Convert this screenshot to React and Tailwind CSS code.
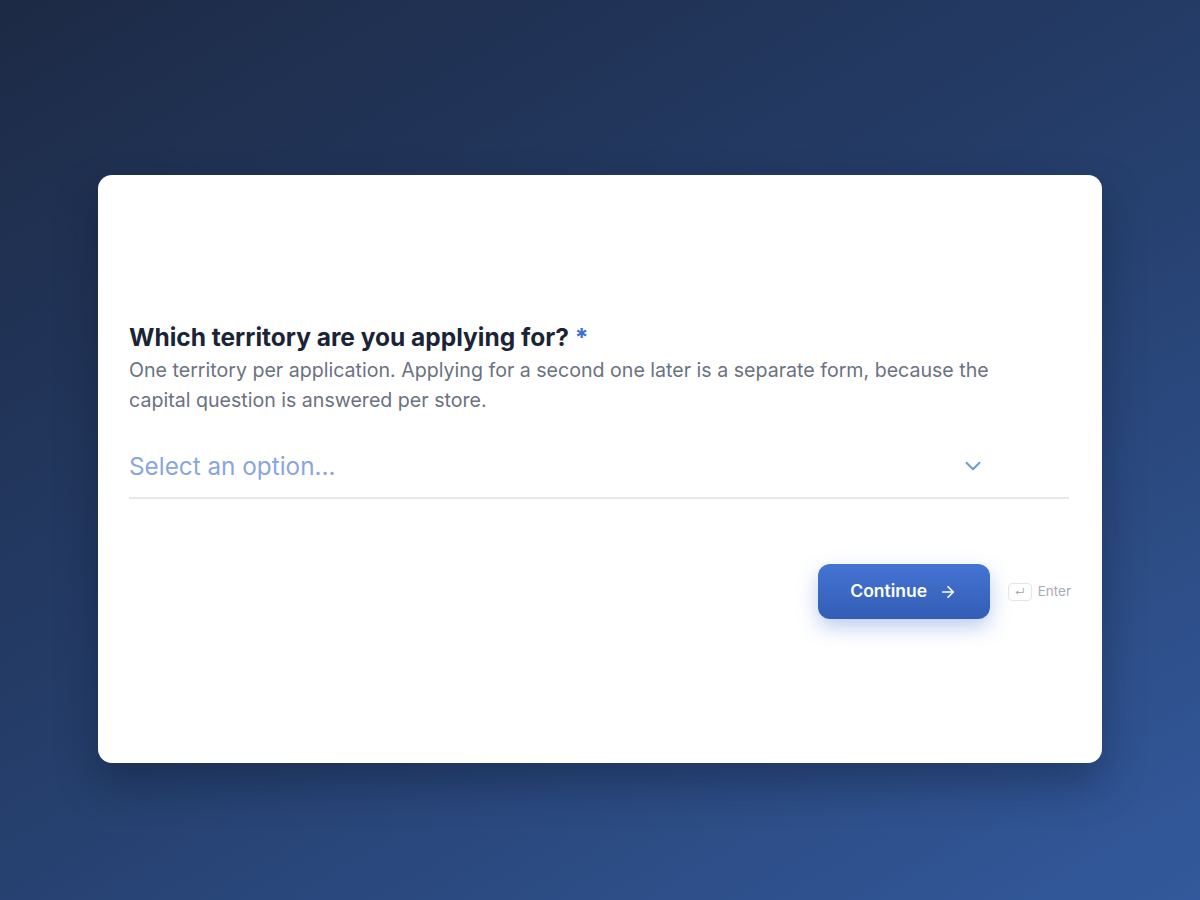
import React from "react";

function ChevronDown() {
  return (
    <svg width="26" height="26" viewBox="0 0 24 24" fill="none" stroke="#7196dc" strokeWidth="1.8" strokeLinecap="round" strokeLinejoin="round">
      <path d="m6 9 6 6 6-6" />
    </svg>
  );
}

function ArrowRight() {
  return (
    <svg width="18" height="18" viewBox="0 0 24 24" fill="none" stroke="currentColor" strokeWidth="2.25" strokeLinecap="round" strokeLinejoin="round">
      <path d="M5 12h14" />
      <path d="m12 5 7 7-7 7" />
    </svg>
  );
}

export default function App() {
  return (
    <div
      className="min-h-[900px] w-full bg-[linear-gradient(150deg,#1d2a45_0%,#253e6b_50%,#33599c_100%)] pt-[175px] flex justify-center"
      style={{ fontFamily: "Inter, 'Noto Sans', sans-serif" }}
    >
      <div className="w-[1004px] h-[588px] bg-white rounded-[14px] shadow-[0_20px_40px_rgba(10,20,40,0.35)] flex flex-col justify-center pl-[31px] pr-[33px]">
        <h1 className="mt-[2px] text-[24.5px] leading-[32px] font-bold text-[#1b2436]">
          Which territory are you applying for? <span className="text-[#3b6fd4]">*</span>
        </h1>
        <p className="mt-[3px] max-w-[890px] text-[19.6px] leading-[29.5px] text-[#6b7280]">
          One territory per application. Applying for a second one later is a separate form, because the capital question is answered per store.
        </p>

        <div className="mt-[23px] pt-3 pb-[15px] pr-[83px] flex items-center border-b-2 border-[#e5e7eb]">
          <span className="flex-1 text-[24.3px] leading-[32px] text-[#8aa6dd]">Select an option...</span>
          <ChevronDown />
        </div>

        <div className="mt-[65px] flex items-center justify-end gap-[18px] -mr-[2px]">
          <button className="w-[172px] h-[55px] rounded-xl bg-[linear-gradient(180deg,#4574d3_0%,#335db5_100%)] shadow-[0_8px_20px_rgba(59,108,210,0.35)] text-white text-[17.5px] font-semibold flex items-center justify-center gap-3">
            Continue
            <ArrowRight />
          </button>
          <div className="flex items-center gap-[6px]">
            <span className="w-[24px] h-[18px] rounded-[4px] border border-[#e3e5e9] flex items-center justify-center text-[10px] leading-none text-[#9ca3af]">
              ↵
            </span>
            <span className="text-[13.5px] text-[#a8abb2]">Enter</span>
          </div>
        </div>
      </div>
    </div>
  );
}
